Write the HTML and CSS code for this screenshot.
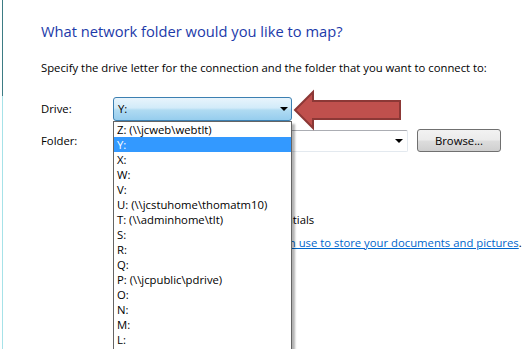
FILE: index.html
```html
<!DOCTYPE html>
<html lang="en">
<head>
<meta charset="UTF-8" />
<meta name="viewport" content="width=device-width, initial-scale=1.0"/>
<title>Map Network Drive</title>
<link rel="stylesheet" href="styles.css">
</head>
<body>

<div class="window">
  <h1 class="title">What network folder would you like to map?</h1>
  <p class="intro">Specify the drive letter for the connection and the folder that you want to connect to:</p>

  <div class="field-row">
    <span class="field-label">Drive:</span>
    <div class="drive-wrap">
      <div class="combo combo-open">Y:<span class="caret"></span></div>
      <ul class="drive-list">
        <li>Z: (\\jcweb\webtlt)</li>
        <li class="selected">Y:</li>
        <li>X:</li>
        <li>W:</li>
        <li>V:</li>
        <li>U: (\\jcstuhome\thomatm10)</li>
        <li>T: (\\adminhome\tlt)</li>
        <li>S:</li>
        <li>R:</li>
        <li>Q:</li>
        <li>P: (\\jcpublic\pdrive)</li>
        <li>O:</li>
        <li>N:</li>
        <li>M:</li>
        <li>L:</li>
      </ul>
    </div>
  </div>

  <div class="field-row folder-row">
    <span class="field-label">Folder:</span>
    <div class="combo combo-folder"><span class="caret"></span></div>
    <button class="browse">Browse...</button>
  </div>

  <div class="options">
    <div class="hint">Example: \\server\share</div>
    <div class="check-row reconnect"><span class="checkbox checked"></span>Reconnect at sign-in</div>
    <div class="check-row"><span class="checkbox"></span>Connect using different credentials</div>
    <div class="link-row"><a href="#" class="link">Connect to a Web site that you can use to store your documents and pictures</a>.</div>
  </div>

  <svg class="callout-arrow" viewBox="0 0 115 45" width="115" height="45">
    <polygon points="5,22 23,4 23,13 110,13 110,31 23,31 23,40" fill="#c0504d" stroke="#8c3836" stroke-width="2" stroke-linejoin="miter"/>
  </svg>
</div>

</body>
</html>
```

FILE: styles.css
```css
* {
  box-sizing: border-box;
}
html, body {
  margin: 0;
  height: 100%;
}
body {
  font-family: "Open Sans", "Noto Sans", sans-serif;
  font-size: 11.3px;
  color: #000;
  background: #fff;
  overflow: hidden;
}

.window {
  position: relative;
  height: 349px;
  margin-left: 2px;
  border-left: 1px solid #3d7c84;
  border-image: linear-gradient(to bottom, #3d7c84 0, #3d7c84 96px, #a6e2e8 96px, #a6e2e8 100%) 1;
  padding: 20px 0 0 38px;
}

.title {
  margin: 0;
  font-size: 14.7px;
  font-weight: 400;
  line-height: 22px;
  color: #1c3aa9;
}
.intro {
  margin: 18px 0 0;
  line-height: 16px;
}

.field-row {
  display: flex;
  align-items: center;
  margin-top: 21px;
}
.folder-row {
  margin-top: 8px;
}
.field-label {
  width: 72px;
  line-height: 16px;
}

.drive-wrap {
  position: relative;
  z-index: 2;
}
.combo {
  position: relative;
  height: 24px;
  line-height: 22px;
  padding-left: 4px;
  border-radius: 3px;
}
.combo-open {
  width: 179px;
  border: 1px solid #3c7fb1;
  background: linear-gradient(to bottom, #e8f4fc 0%, #d2ebf9 45%, #b0dbf2 55%, #96cdee 100%);
}
.combo-folder {
  width: 295px;
  height: 22px;
  border: 1px solid #e3e9ef;
  border-top-color: #abadb3;
  border-radius: 2px;
  background: #fff;
}
.caret {
  position: absolute;
  right: 3px;
  top: 50%;
  margin-top: -2px;
  border-left: 4px solid transparent;
  border-right: 4px solid transparent;
  border-top: 4px solid #000;
}
.combo-folder .caret {
  right: 4px;
}

.drive-list {
  position: absolute;
  top: 100%;
  left: 0;
  width: 179px;
  margin: 0;
  padding: 0 0 20px;
  list-style: none;
  background: #fff;
  border: 1px solid #646464;
  box-shadow: 3px 3px 2px rgba(0, 0, 0, 0.3);
}
.drive-list li {
  height: 15px;
  line-height: 15px;
  padding-left: 3px;
  white-space: nowrap;
}
.drive-list li.selected {
  background: #3399ff;
  color: #fff;
}

.browse {
  margin-left: 9px;
  width: 84px;
  height: 23px;
  padding: 0;
  font: inherit;
  color: #000;
  border: 1px solid #707070;
  border-radius: 3px;
  background: linear-gradient(to bottom, #f2f2f2 0%, #ebebeb 48%, #dddddd 52%, #cfcfcf 100%);
}

.options {
  padding-left: 72px;
}
.hint {
  margin-top: 3px;
  line-height: 16px;
  color: #6d6d6d;
}
.check-row {
  display: flex;
  align-items: center;
  margin-top: 7px;
  line-height: 16px;
}
.check-row.reconnect {
  margin-top: 18px;
}
.checkbox {
  width: 13px;
  height: 13px;
  margin-right: 4px;
  border: 1px solid #8e8f8f;
  background: linear-gradient(to bottom, #f4f4f4, #e2e2e2);
}
.link-row {
  margin-top: 7px;
  line-height: 16px;
}
.link {
  color: #0066cc;
}

.callout-arrow {
  position: absolute;
  left: 287px;
  top: 88px;
  z-index: 3;
}
```
